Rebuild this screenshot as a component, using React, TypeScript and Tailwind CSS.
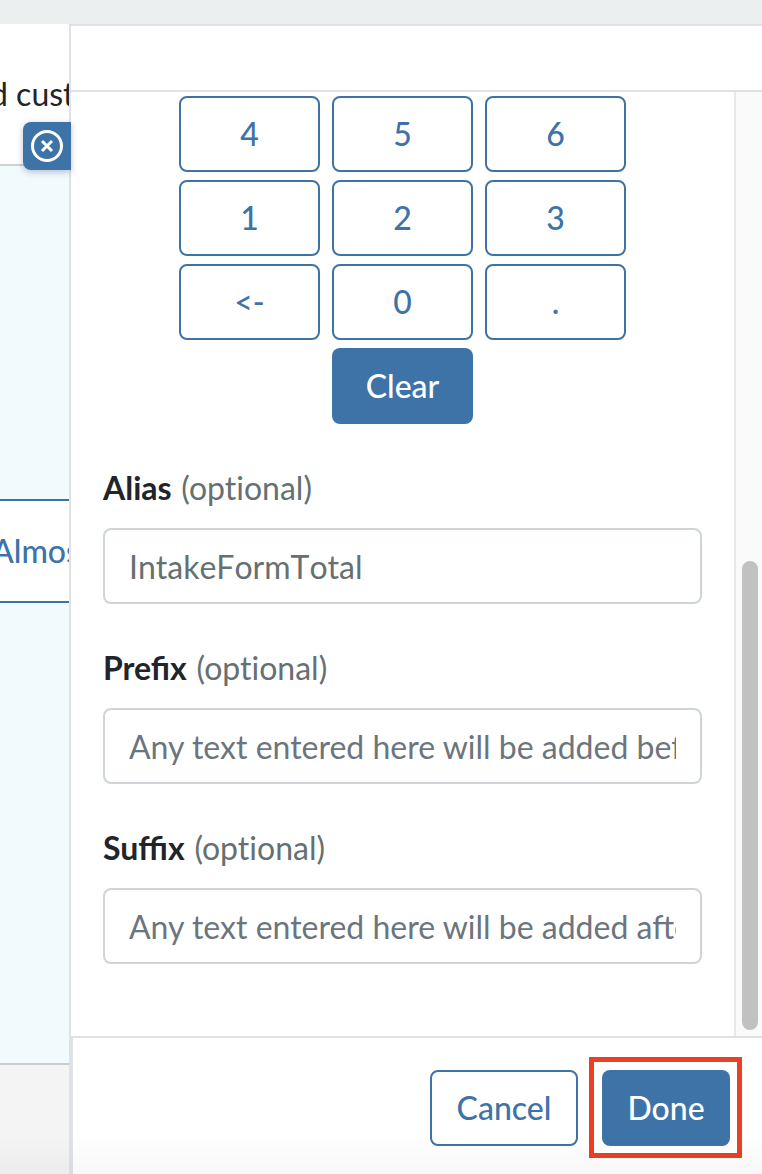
import { useState } from "react";

const KEYS = ["4", "5", "6", "1", "2", "3", "<-", "0", "."];

function Field({
  id,
  label,
  placeholder,
  initial = "",
}: {
  id: string;
  label: string;
  placeholder?: string;
  initial?: string;
}) {
  const [value, setValue] = useState(initial);
  return (
    <div className="mt-10">
      <label htmlFor={id} className="block font-bold text-[#212529]">
        {label}{" "}
        <span className="ml-0.5 font-normal text-[#647072] [font-variant-ligatures:none]">
          (optional)
        </span>
      </label>
      <input
        id={id}
        type="text"
        value={value}
        placeholder={placeholder}
        onChange={(e) => setValue(e.target.value)}
        className="mt-4 block h-19 w-full rounded-lg border-2 border-[#ced4da] bg-white px-6 text-[#647072] [font-kerning:none] placeholder:text-[#6c757d] placeholder-shown:[font-kerning:normal]"
      />
    </div>
  );
}

function Keypad() {
  return (
    <div className="mx-auto grid w-[447px] max-w-full grid-cols-3 gap-x-3 gap-y-2">
      {KEYS.map((key) => (
        <button
          key={key}
          type="button"
          className="h-19 rounded-lg border-2 border-[#3e73a8] bg-white font-medium text-[#3e73a8]"
        >
          {key}
        </button>
      ))}
      <button
        type="button"
        className="col-start-2 h-19 rounded-lg bg-[#3e73a8] font-medium text-white"
      >
        Clear
      </button>
    </div>
  );
}

function PageBehind() {
  return (
    <main className="flex w-[69px] shrink-0 flex-col overflow-hidden whitespace-nowrap bg-[#f4f4f4]">
      <div className="h-[142px] border-b-2 border-[#d0d0d2] bg-white pt-[46px]">
        <p className="-ml-2.5 text-[#212529]">d cust</p>
      </div>
      <div className="h-[899px] border-b-2 border-[#c8cdc9] bg-[#f1fafd] pt-[333px]">
        <div className="flex h-[104px] items-center border-y-2 border-[#3e73a8] bg-white">
          <a href="#almost" className="-ml-2 font-medium text-[#3e73a8]">
            Almos
          </a>
        </div>
      </div>
    </main>
  );
}

export default function App() {
  return (
    <div className="relative flex min-h-screen flex-col bg-white font-['Lato',sans-serif] text-[32px] leading-[48px]">
      <div className="h-6 bg-[#ebefef]" />
      <div className="flex flex-1">
        <PageBehind />
        <aside className="relative flex min-w-0 flex-1 flex-col border-t-2 border-l-2 border-[#dee2e6] bg-white">
          <button
            type="button"
            aria-label="Close panel"
            className="absolute top-24 -left-12 flex size-12 items-center justify-center rounded-l-lg bg-[#3e73a8] shadow-[0_2px_6px_rgba(40,50,90,0.3)]"
          >
            <svg
              viewBox="0 0 32 32"
              className="size-8"
              fill="none"
              stroke="white"
              strokeWidth="3"
            >
              <circle cx="16" cy="16" r="14.5" />
              <path d="M11 11l10 10M21 11l-10 10" />
            </svg>
          </button>
          <header className="h-[66px] border-b-2 border-[#dee2e6]" />
          <div className="flex flex-1">
            <div className="min-w-0 flex-1 px-8 pt-1 pb-18">
              <Keypad />
              <Field id="alias" label="Alias" initial="IntakeFormTotal" />
              <Field
                id="prefix"
                label="Prefix"
                placeholder="Any text entered here will be added before the value"
              />
              <Field
                id="suffix"
                label="Suffix"
                placeholder="Any text entered here will be added after the value"
              />
            </div>
            <div className="flex w-7 flex-col justify-end border-l-2 border-[#e8e8e8] bg-[#fafafa] pb-1.5 pl-1.5">
              <div className="h-[469px] w-4 rounded-full bg-[#c1c1c1]" />
            </div>
          </div>
          <footer className="flex h-[138px] items-start justify-end gap-6 border-t-2 border-l-2 border-[#dee2e6] pt-8 pr-8">
            <button
              type="button"
              className="h-19 w-37 rounded-lg border-2 border-[#3e73a8] bg-white font-medium text-[#3e73a8]"
            >
              Cancel
            </button>
            <div className="relative">
              <button
                type="button"
                className="h-19 w-32 rounded-lg bg-[#3e73a8] font-medium text-white"
              >
                Done
              </button>
              <div className="pointer-events-none absolute -top-[13px] -right-3 -bottom-3 -left-[13px] border-5 border-[#ea4025]" />
            </div>
          </footer>
        </aside>
      </div>
      <div className="pointer-events-none absolute inset-x-0 bottom-0 h-10 bg-linear-to-b from-transparent to-black/3" />
    </div>
  );
}
